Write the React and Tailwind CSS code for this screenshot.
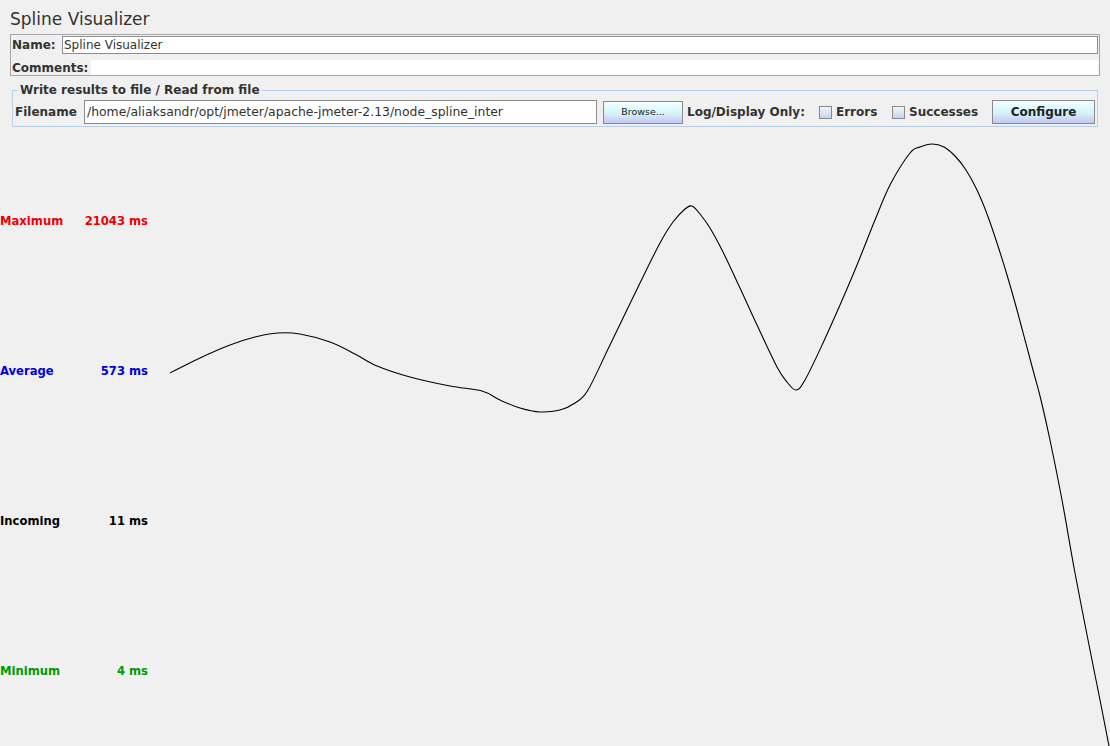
import React from "react";

const PTS = [
  [170, 373], [200, 358], [230, 345], [255, 337], [278, 333], [300, 334], [330, 342], [355, 354],
  [377, 366], [410, 377], [450, 386], [482, 391], [500, 400], [520, 408], [540, 412], [560, 410],
  [575, 403], [588, 390], [610, 345], [640, 283], [660, 243], [673, 222], [685, 209], [692, 206],
  [700, 214], [710, 228], [723, 252], [740, 288], [757, 325], [777, 367], [787, 382], [796, 390],
  [805, 380], [823, 343], [840, 305], [857, 265], [875, 220], [890, 185], [910, 153], [920, 147],
  [932, 144], [944, 147], [955, 156], [966, 170], [977, 190], [987, 214], [997, 243], [1007, 275],
  [1017, 310], [1033, 370], [1041, 400],
  [1050, 440], [1062, 500], [1075, 573], [1090, 650], [1102, 710], [1109, 746], [1110, 752],
];

function smoothPath(p) {
  let d = `M${p[0][0]},${p[0][1]}`;
  for (let i = 0; i < p.length - 1; i++) {
    const p0 = p[i - 1] || p[i];
    const p1 = p[i];
    const p2 = p[i + 1];
    const p3 = p[i + 2] || p2;
    const t = 0.5 / 3;
    const c1x = p1[0] + (p2[0] - p0[0]) * t;
    const c1y = p1[1] + (p2[1] - p0[1]) * t;
    const c2x = p2[0] - (p3[0] - p1[0]) * t;
    const c2y = p2[1] - (p3[1] - p1[1]) * t;
    d += ` C${c1x.toFixed(1)},${c1y.toFixed(1)} ${c2x.toFixed(1)},${c2y.toFixed(1)} ${p2[0]},${p2[1]}`;
  }
  return d;
}

const btn =
  "border border-[#8a8a8a] bg-[linear-gradient(to_bottom,#f4ffff_0%,#dcfafc_35%,#d4eefa_60%,#cad4f6_85%,#c6c8f4_100%)] text-[#222]";

function Check() {
  return (
    <span className="inline-block w-[13px] h-[13px] border border-[#8a8a8a] bg-[linear-gradient(to_bottom,#eef6fc,#d4e2f4_60%,#c8d0f0)]" />
  );
}

function Stat({ label, value, color }) {
  return (
    <div className="h-[150px] flex items-center">
      <div className={`w-[148px] flex justify-between font-bold text-[11.6px] leading-[14px] ${color}`}>
        <span>{label}</span>
        <span>{value}</span>
      </div>
    </div>
  );
}

export default function App() {
  return (
    <div
      className="w-[1110px] h-[746px] bg-[#f0f0f0] overflow-hidden flex flex-col text-[#333]"
      style={{ fontFamily: '"DejaVu Sans", Verdana, sans-serif' }}
    >
      <div className="h-[34px] pl-[10px] pt-[9px] text-[17px] leading-[20px] text-[#333]">Spline Visualizer</div>

      <div className="ml-[10px] w-[1090px] h-[42px] border border-[#a6a6a6] flex flex-col">
        <div className="flex items-center mt-[1px] h-[18px]">
          <span className="pl-[1px] w-[51px] font-bold text-[12px] leading-[14px]">Name:</span>
          <div className="flex-1 mr-[1px] h-[18px] border border-[#8c8c8c] bg-white flex items-center pl-[1px] text-[12px] leading-[14px] text-[#333]">
            Spline Visualizer
          </div>
        </div>
        <div className="flex items-center mt-[6px] h-[15px]">
          <span className="pl-[1px] w-[80px] font-bold text-[12px] leading-[14px]">Comments:</span>
          <div className="flex-1 mr-[1px] h-[15px] bg-white" />
        </div>
      </div>

      <fieldset className="ml-[12px] mt-[7px] w-[1086px] border border-[#b8d0e8] pb-[2px] pt-[3px]">
        <legend className="ml-[5px] px-[2px] font-bold text-[12px] leading-[14px] text-[#333]">
          Write results to file / Read from file
        </legend>
        <div className="flex items-center h-[24px] pl-[2px]">
          <span className="font-bold text-[12px] leading-[14px] w-[69px]">Filename</span>
          <div className="w-[513px] h-[24px] border border-[#8c8c8c] bg-white flex items-center pl-[2px] text-[12.4px] leading-[14px] text-[#333] whitespace-nowrap overflow-hidden">
            /home/aliaksandr/opt/jmeter/apache-jmeter-2.13/node_spline_inter
          </div>
          <div className={`ml-[6px] w-[80px] h-[23px] flex items-center justify-center text-[9.5px] ${btn}`}>Browse...</div>
          <span className="ml-[4px] font-bold text-[12px] leading-[14px] w-[132px]">Log/Display Only:</span>
          <Check />
          <span className="ml-[4px] font-bold text-[12px] leading-[14px] w-[56px]">Errors</span>
          <Check />
          <span className="ml-[4px] font-bold text-[12px] leading-[14px] w-[83px]">Successes</span>
          <div className={`w-[103px] h-[24px] flex items-center justify-center font-bold text-[12px] ${btn}`}>Configure</div>
        </div>
      </fieldset>

      <div className="flex-1 flex">
        <div className="w-[170px] pt-[19px] flex flex-col">
          <Stat label="Maximum" value="21043 ms" color="text-[#ee0000]" />
          <Stat label="Average" value="573 ms" color="text-[#0000dd]" />
          <Stat label="Incoming" value="11 ms" color="text-black" />
          <Stat label="Minimum" value="4 ms" color="text-[#009a00]" />
        </div>
        <svg width="940" height="619" viewBox="170 127 940 619" className="block">
          <path d={smoothPath(PTS)} fill="none" stroke="#000" strokeWidth="1.1" />
        </svg>
      </div>
    </div>
  );
}
